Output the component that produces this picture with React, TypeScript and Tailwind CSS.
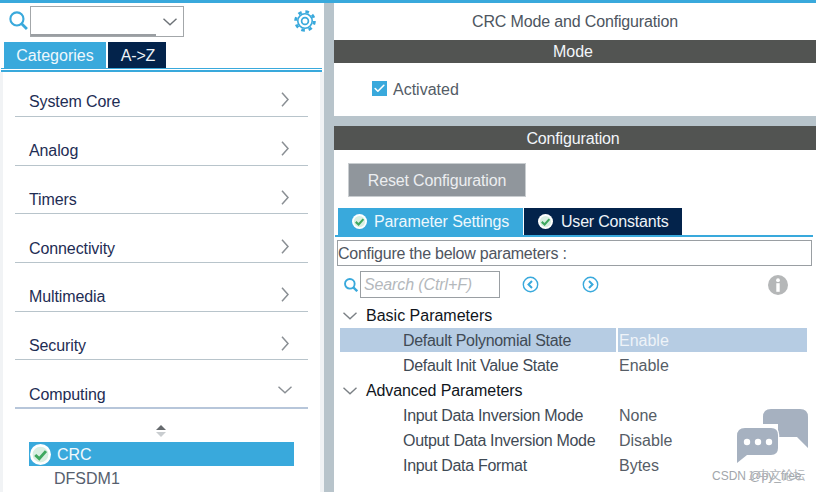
import { Check } from 'lucide-react'

const categories = ['System Core', 'Analog', 'Timers', 'Connectivity', 'Multimedia', 'Security']

const basicParams = [
  { label: 'Default Polynomial State', value: 'Enable', selected: true },
  { label: 'Default Init Value State', value: 'Enable', selected: false },
]

const advancedParams = [
  { label: 'Input Data Inversion Mode', value: 'None' },
  { label: 'Output Data Inversion Mode', value: 'Disable' },
  { label: 'Input Data Format', value: 'Bytes' },
]

function GreenCheck({ size }: { size: number }) {
  return (
    <svg width={size} height={size} viewBox="0 0 20 20" className="shrink-0">
      <circle cx="10" cy="10" r="10" fill="#ffffff" />
      <circle cx="10" cy="10" r="7.5" fill="#d9efe2" />
      <path d="M5 10.5 L8.8 14 L15.2 6.8" fill="none" stroke="#3fa85f" strokeWidth="2.8" />
    </svg>
  )
}

function SearchGlyph({ size, stroke }: { size: number; stroke: number }) {
  return (
    <svg width={size} height={size} viewBox="0 0 18 18" fill="none" stroke="#39a9dc" className="shrink-0">
      <circle cx="7.5" cy="7.5" r="6.2" strokeWidth={stroke} />
      <path d="M12 12 L17 17" strokeWidth={stroke + 0.6} />
    </svg>
  )
}

function ChevronOpen({ color = '#7b8085' }: { color?: string }) {
  return (
    <svg width="14" height="8" viewBox="0 0 14 8" fill="none" stroke={color} strokeWidth="1.4" className="shrink-0">
      <path d="M0.5 0.8 L7 6.8 L13.5 0.8" />
    </svg>
  )
}

function ChevronClosed() {
  return (
    <svg width="8" height="15" viewBox="0 0 8 15" fill="none" stroke="#8a8f94" strokeWidth="1.5" className="mb-[7px] shrink-0">
      <path d="M1 0.8 L7 7.5 L1 14.2" />
    </svg>
  )
}

function ParamRow({ label, value, selected }: { label: string; value: string; selected?: boolean }) {
  return (
    <div className={`flex items-center ${selected ? 'mb-[1px] h-[24px] bg-[#b6cce3]' : 'h-[25px]'}`}>
      <div className={`h-full w-[278px] shrink-0 pl-[63px] leading-[25px] tracking-[-0.3px] text-[#3f4a55] ${selected ? 'border-r-2 border-white' : ''}`}>
        {label}
      </div>
      <div className={`pl-[1px] ${selected ? 'mt-[1px] text-[#eef3f8]' : 'text-[#565d66]'}`}>{value}</div>
    </div>
  )
}

export default function App() {
  return (
    <div className="flex h-[492px] w-[816px] flex-col overflow-hidden bg-[#b8c4cb] font-['Liberation_Sans',Arial,sans-serif] text-base">
      <div className="h-[3px] shrink-0 bg-[#39a9dc]" />
      <div className="flex min-h-0 flex-1">
        {/* Left - categories */}
        <div className="flex w-[324px] shrink-0 flex-col bg-white">
          <div className="flex h-[39px] shrink-0 items-start pt-[3px]">
            <div className="ml-[9px] mt-[5px]">
              <SearchGlyph size={19} stroke={2} />
            </div>
            <div className="ml-[2px] flex h-[31px] w-[154px] items-stretch border border-[#a3a7aa] bg-white">
              <div className="w-[125px] border-b-2 border-[#9a9ea2]" />
              <div className="flex flex-1 items-center justify-center">
                <ChevronOpen color="#6d7277" />
              </div>
            </div>
            <svg width="22" height="22" viewBox="0 0 22 22" fill="none" stroke="#39a9dc" className="ml-[110px] mt-[4px]">
              <circle cx="11" cy="11" r="9.4" strokeWidth="2.8" strokeDasharray="3.6 3.8" />
              <circle cx="11" cy="11" r="7.2" strokeWidth="1.6" />
              <circle cx="11" cy="11" r="3.4" strokeWidth="1.7" />
            </svg>
          </div>
          <div className="flex h-[26px] shrink-0 pl-[4px]">
            <div className="flex w-[102px] items-center justify-center bg-[#39a9dc] pt-[1px] text-[#eef8fc]">Categories</div>
            <div className="ml-[2px] flex w-[58px] items-center justify-center bg-[#03234b] pl-[2px] pt-[1px] tracking-[-0.2px] text-[#eef3f8]">A-&gt;Z</div>
          </div>
          <div className="ml-[1px] mr-[2px] h-[4px] shrink-0 border-y border-b-2 border-t-[#39a9dc] border-b-[#39a9dc] bg-white" />
          <div className="flex-1 bg-[#f1f3f5] pl-[3px] pr-[4px]">
            <div className="h-full bg-white px-[12px]">
              {categories.map((name, i) => (
                <div
                  key={name}
                  className={`flex items-end justify-between border-b border-[#b8c4cb] pl-[14px] pr-[19px] tracking-[-0.1px] text-[#1e2d54] ${i === 0 ? 'h-[45px] pb-[2px]' : 'h-[48.67px] pb-[1.4px]'}`}
                >
                  <span>{name}</span>
                  <ChevronClosed />
                </div>
              ))}
              <div className="flex h-[49px] items-end justify-between border-b-2 border-[#b7c6da] pl-[14px] pr-[16px] tracking-[-0.1px] text-[#1e2d54]">
                <span>Computing</span>
                <div className="mb-[13px]">
                  <ChevronOpen color="#8a8f94" />
                </div>
              </div>
              <div className="flex h-[33px] items-start justify-center pt-[15px]">
                <svg width="12" height="14" viewBox="0 0 12 14" className="-ml-[1px]">
                  <path d="M6 1 L11 6 H1 Z" fill="#666a6e" />
                  <path d="M1 8 H11 L6 13 Z" fill="#c9cdd0" />
                </svg>
              </div>
              <div className="ml-[14px] flex h-[24px] w-[265px] items-center bg-[#39a9dc] pl-[1px] text-[#f2fafd]">
                <GreenCheck size={21} />
                <span className="ml-[6px] mt-[1px]">CRC</span>
              </div>
              <div className="ml-[39px] mt-[1px] text-[#56606e]">DFSDM1</div>
            </div>
          </div>
        </div>

        <div className="w-[10px] shrink-0" />

        {/* Right - mode and configuration */}
        <div className="flex min-w-0 flex-1 flex-col">
          <div className="flex h-[37px] items-center justify-center bg-white tracking-[-0.15px] text-[#4d5560]">CRC Mode and Configuration</div>
          <div className="flex h-[23px] items-center justify-center bg-[#525452] pr-[4px] text-[#f2f6fa]">Mode</div>
          <div className="flex h-[53px] items-start bg-white pl-[38px] pt-[15px] text-[#545c66]">
            <div className="mt-[3px] flex h-[15px] w-[15px] items-center justify-center bg-[#39a9dc]">
              <Check className="h-[13px] w-[13px] text-white" strokeWidth={3} />
            </div>
            <span className="ml-[6px]">Activated</span>
          </div>
          <div className="h-[10px]" />
          <div className="flex h-[24px] items-center justify-center bg-[#525452] pr-[4px] pt-[1px] tracking-[-0.15px] text-[#f2f6fa]">Configuration</div>
          <div className="relative flex-1 bg-white">
            <div className="ml-[14px] mt-[13px] flex h-[34px] w-[178px] items-center justify-center border border-[#c9cdd0] bg-[#90969c] pt-[1px] tracking-[-0.16px] text-[#eceef0]">
              Reset Configuration
            </div>
            <div className="ml-[4px] mt-[11px] flex h-[27px]">
              <div className="flex w-[185px] items-center gap-[7px] bg-[#39a9dc] pl-[14px] tracking-[-0.1px] text-[#eef8fc]">
                <GreenCheck size={15} />
                <span>Parameter Settings</span>
              </div>
              <div className="ml-[1px] flex w-[158px] items-center gap-[8px] bg-[#03234b] pl-[14px] tracking-[-0.2px] text-[#eef3f8]">
                <GreenCheck size={15} />
                <span>User Constants</span>
              </div>
            </div>
            <div className="ml-[1px] mr-[3px] h-[2px] bg-[#39a9dc]" />
            <div className="ml-[3px] mr-[4px] mt-[3px] flex h-[26px] items-center border border-[#9a9fa3] pt-[1px] tracking-[-0.25px] text-[#4f5560]">
              Configure the below parameters :
            </div>
            <div className="mt-[5px] flex h-[27px] items-center">
              <div className="ml-[10px]">
                <SearchGlyph size={14} stroke={2.4} />
              </div>
              <div className="ml-[2px] flex h-[27px] w-[140px] items-center border border-[#9a9fa3] pl-[3px] pt-[1px] italic tracking-[-0.12px] text-[#b4b8bc]">
                Search (Ctrl+F)
              </div>
              <svg width="17" height="17" viewBox="0 0 17 17" className="ml-[22px]" fill="none" stroke="#39a9dc">
                <circle cx="8.5" cy="8.5" r="7.2" strokeWidth="1.4" />
                <path d="M10 5 L6.5 8.5 L10 12" strokeWidth="2" />
              </svg>
              <svg width="17" height="17" viewBox="0 0 17 17" className="ml-[43px]" fill="none" stroke="#39a9dc">
                <circle cx="8.5" cy="8.5" r="7.2" strokeWidth="1.4" />
                <path d="M7 5 L10.5 8.5 L7 12" strokeWidth="2" />
              </svg>
              <svg width="20" height="20" viewBox="0 0 20 20" className="ml-[169px]">
                <circle cx="10" cy="10" r="10" fill="#b5b7b8" />
                <circle cx="10" cy="5.2" r="1.9" fill="#ffffff" />
                <rect x="8.3" y="8.2" width="3.4" height="8.6" fill="#ffffff" />
              </svg>
            </div>
            <div className="ml-[6px] mr-[9px] mt-[5px]">
              <div className="flex h-[25px] items-center text-[#10151c]">
                <div className="ml-[3px]">
                  <ChevronOpen />
                </div>
                <span className="ml-[9px]">Basic Parameters</span>
              </div>
              {basicParams.map((p) => (
                <ParamRow key={p.label} {...p} />
              ))}
              <div className="flex h-[25px] items-center text-[#10151c]">
                <div className="ml-[3px]">
                  <ChevronOpen />
                </div>
                <span className="ml-[9px] tracking-[-0.1px]">Advanced Parameters</span>
              </div>
              {advancedParams.map((p) => (
                <ParamRow key={p.label} {...p} />
              ))}
            </div>

            {/* Watermark */}
            <svg width="72" height="56" viewBox="0 0 72 56" className="absolute left-[403px] top-[259px]">
              <path d="M26 15 V8 Q26 0 34 0 H63 Q71 0 71 8 V39 L60 28 H41 V15 Z" fill="#a6b1c0" />
              <path d="M8 19 H34 Q41 19 41 26 V39 Q41 46 34 46 H10 L0 54 V27 Q0 19 8 19 Z" fill="#a6b1c0" stroke="#ffffff" strokeWidth="2.5" paintOrder="stroke" />
              <circle cx="10" cy="33" r="3.2" fill="#ffffff" />
              <circle cx="21" cy="33" r="3.2" fill="#ffffff" />
              <circle cx="32" cy="33" r="3.2" fill="#ffffff" />
            </svg>
            <span className="absolute left-[378px] top-[318px] text-xs text-[#a2a6ab]">CSDN @py_free</span>
            <span className="absolute left-[414px] top-[317px] font-['Noto_Sans_CJK_SC',sans-serif] text-xs text-[#b0b4b9]">1 中文论坛</span>
          </div>
        </div>
      </div>
    </div>
  )
}
